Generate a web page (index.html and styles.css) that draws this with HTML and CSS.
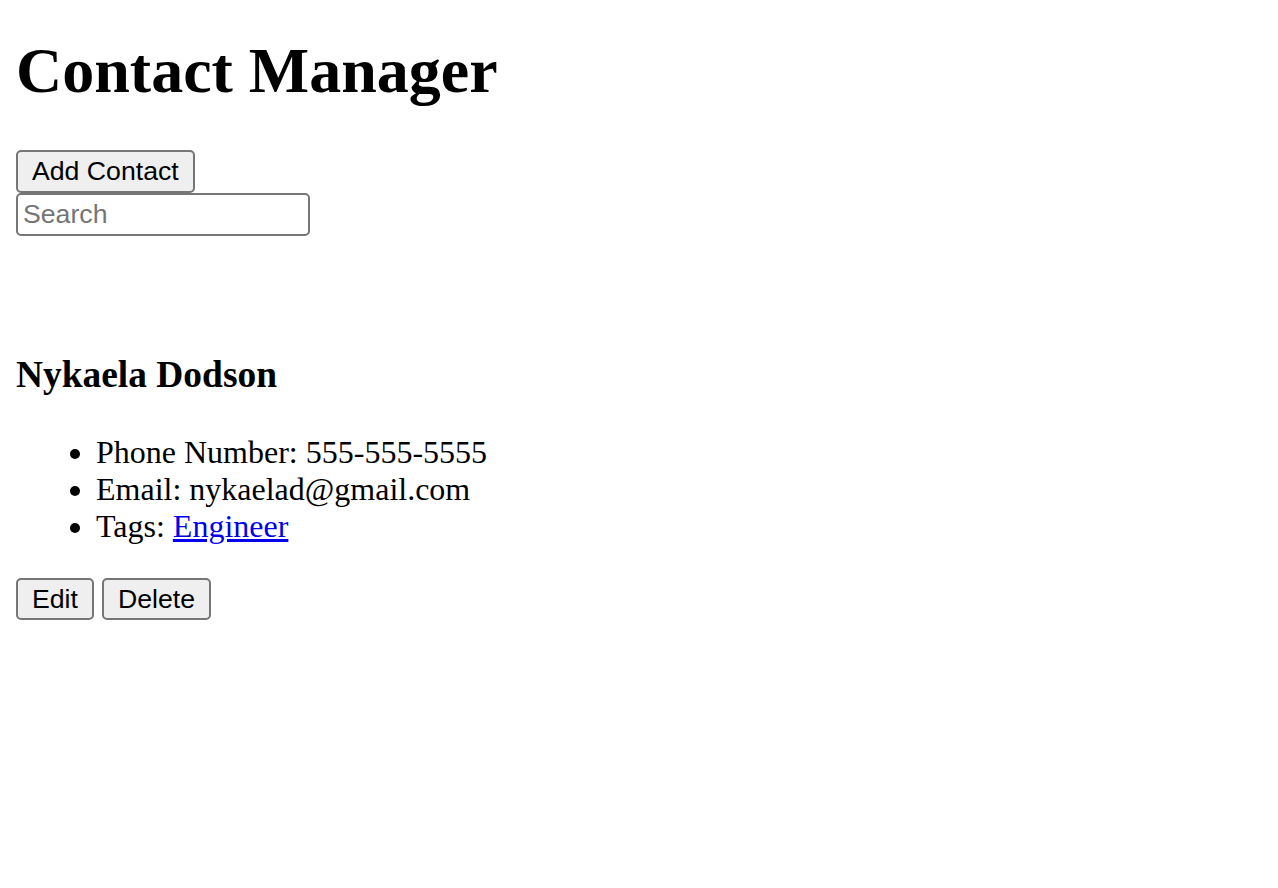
FILE: index.html
```html
<!DOCTYPE html>
<html lang="en">
<head>
<meta charset="utf-8">
<title>Contact Manager</title>
<link rel="stylesheet" href="styles.css">
</head>
<body>
<div class="app">
  <h1 class="title">Contact Manager</h1>
  <div class="toolbar">
    <button class="btn">Add Contact</button>
    <input class="search" type="text" placeholder="Search">
  </div>
  <div class="contacts">
    <div class="contact">
      <h3 class="name">Nykaela Dodson</h3>
      <ul class="details">
        <li>Phone Number: 555-555-5555</li>
        <li>Email: nykaelad@gmail.com</li>
        <li>Tags: <a class="tag" href="#">Engineer</a></li>
      </ul>
      <div class="actions">
        <button class="btn">Edit</button>
        <button class="btn">Delete</button>
      </div>
    </div>
  </div>
</div>
</body>
</html>
```

FILE: styles.css
```css
html, body {
  margin: 0;
  padding: 0;
  background: #ffffff;
}

body {
  font-family: "Liberation Serif", "Times New Roman", serif;
  color: #000000;
}

.app {
  padding: 34px 16px 16px;
}

.title {
  margin: 0 0 42px;
  font-size: 64px;
  font-weight: bold;
  line-height: 74px;
}

.toolbar {
  display: flex;
  flex-direction: column;
  align-items: flex-start;
}

.btn {
  box-sizing: border-box;
  height: 43px;
  padding: 0 14px;
  font-family: "Liberation Sans", Arial, sans-serif;
  font-size: 26.67px;
  line-height: 1;
  color: #000000;
  background: #efefef;
  border: 2px solid #767676;
  border-radius: 5px;
}

.search {
  box-sizing: border-box;
  width: 294px;
  height: 43px;
  margin: 0;
  padding: 2px 5px;
  font-family: "Liberation Sans", Arial, sans-serif;
  font-size: 26.67px;
  color: #000000;
  background: #ffffff;
  border: 2px solid #767676;
  border-radius: 5px;
}

.search::placeholder {
  color: #757575;
}

.contacts {
  margin-top: 117px;
}

.name {
  margin: 0 0 38px;
  font-size: 37.44px;
  font-weight: bold;
  line-height: 43px;
}

.details {
  margin: 0 0 34px;
  padding-left: 80px;
  font-size: 32px;
  line-height: 36.8px;
}

.tag {
  color: #0000ee;
  text-decoration: underline;
}

.actions {
  display: flex;
  gap: 8px;
}

.actions .btn {
  height: 42px;
}
```
